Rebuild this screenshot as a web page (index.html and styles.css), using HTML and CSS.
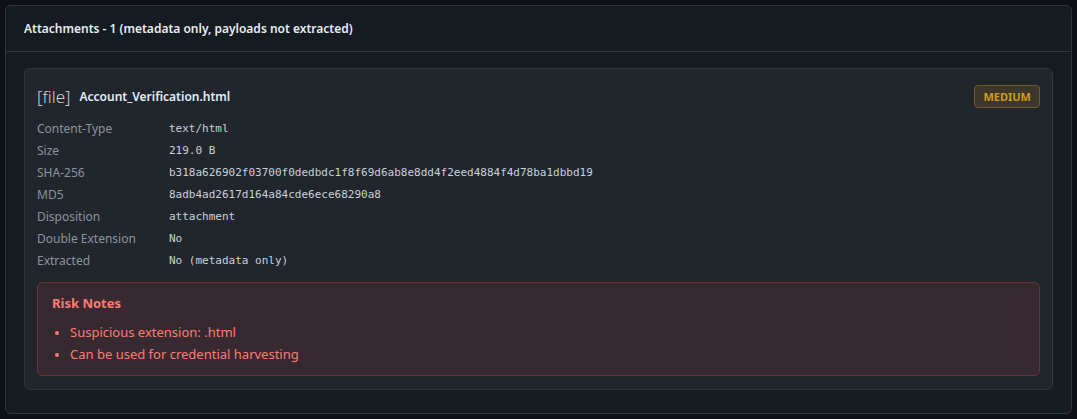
FILE: index.html
```html
<!DOCTYPE html>
<html lang="en">
<head>
<meta charset="utf-8">
<title>Attachments</title>
<link rel="stylesheet" href="styles.css">
</head>
<body>
<section class="panel">
  <header class="panel-header">Attachments - 1 (metadata only, payloads not extracted)</header>
  <div class="panel-body">
    <article class="att">
      <div class="att-head">
        <div class="att-name"><span class="att-tag">[file]</span><span class="att-file">Account_Verification.html</span></div>
        <span class="badge">MEDIUM</span>
      </div>
      <dl class="meta">
        <div class="meta-row"><dt>Content-Type</dt><dd>text/html</dd></div>
        <div class="meta-row"><dt>Size</dt><dd>219.0 B</dd></div>
        <div class="meta-row"><dt>SHA-256</dt><dd>b318a626902f03700f0dedbdc1f8f69d6ab8e8dd4f2eed4884f4d78ba1dbbd19</dd></div>
        <div class="meta-row"><dt>MD5</dt><dd>8adb4ad2617d164a84cde6ece68290a8</dd></div>
        <div class="meta-row"><dt>Disposition</dt><dd>attachment</dd></div>
        <div class="meta-row"><dt>Double Extension</dt><dd>No</dd></div>
        <div class="meta-row"><dt>Extracted</dt><dd>No (metadata only)</dd></div>
      </dl>
      <div class="risk">
        <div class="risk-title">Risk Notes</div>
        <ul class="risk-list">
          <li>Suspicious extension: .html</li>
          <li>Can be used for credential harvesting</li>
        </ul>
      </div>
    </article>
  </div>
</section>
</body>
</html>
```
FILE: styles.css
```css
* { box-sizing: border-box; }
html, body { margin: 0; }
body {
  background: #0e1218;
  padding: 5px;
  font-family: "Noto Sans", "Open Sans", sans-serif;
  color: #e6edf3;
}
.panel {
  background: #161b22;
  border: 1px solid #30363d;
  border-radius: 6px;
  height: 409px;
}
.panel-header {
  height: 46px;
  padding: 0 18px;
  display: flex;
  align-items: center;
  font-size: 12px;
  font-weight: 600;
  color: #e6edf3;
  border-bottom: 1px solid #30363d;
}
.panel-body {
  padding: 16px 18px 24px;
}
.att {
  background: #21262d;
  border: 1px solid #30363d;
  border-radius: 6px;
  padding: 14px 12px 13px;
}
.att-head {
  height: 26px;
  display: flex;
  align-items: center;
  justify-content: space-between;
}
.att-name { display: flex; align-items: center; gap: 9px; }
.att-tag { font-size: 17px; font-weight: 300; color: #c9d1d9; }
.att-file { font-size: 12px; font-weight: 600; color: #e6edf3; }
.badge {
  font-size: 11px;
  font-weight: 700;
  color: #d29922;
  background: #3c372b;
  border: 1px solid #6f5b26;
  border-radius: 4px;
  height: 23px;
  padding: 0 8px;
  display: flex;
  align-items: center;
}
.meta { margin: 8px 0 0; }
.meta-row { display: flex; height: 22px; align-items: center; }
.meta dt {
  width: 132px;
  flex: none;
  font-size: 12px;
  color: #8b949e;
}
.meta dd {
  margin: 0;
  font-family: "DejaVu Sans Mono", "Liberation Mono", monospace;
  font-size: 11px;
  color: #c9d1d9;
}
.risk {
  margin-top: 11px;
  background: #362a30;
  border: 1px solid #6e3337;
  border-radius: 6px;
  padding: 10px 14px;
  color: #ff7b72;
}
.risk-title { font-size: 13px; font-weight: 700; line-height: 20px; }
.risk-list { margin: 8px 0 0; padding-left: 18px; }
.risk-list li { font-size: 13px; line-height: 22px; }
.risk-list li::marker { font-size: 12px; }
```
